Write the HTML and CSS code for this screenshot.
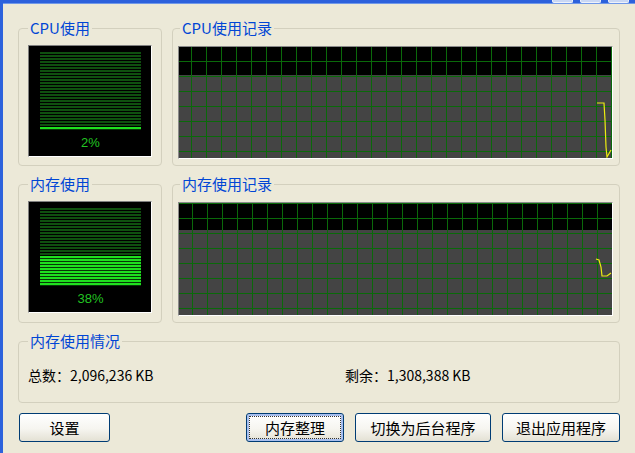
FILE: index.html
```html
<!DOCTYPE html>
<html lang="zh-CN">
<head>
    <meta charset="UTF-8">
    <title>内存整理</title>
    <link rel="stylesheet" href="styles.css">
</head>
<body>
    <div class="window">
        <div class="titlebar">
            <span class="tb-btn"></span>
            <span class="tb-btn"></span>
            <span class="tb-btn"></span>
        </div>

        <div class="content">
            <fieldset class="group group-meter">
                <legend>CPU使用</legend>
                <div class="meter">
                    <div class="bars"><div class="bars-fill" style="height: 3px"></div></div>
                    <div class="percent">2%</div>
                </div>
            </fieldset>

            <fieldset class="group group-graph">
                <legend>CPU使用记录</legend>
                <div class="graph graph-cpu">
                    <svg class="trace"><polyline points="418,56 425,56 426,73 427,100 428,110 432,103"/></svg>
                </div>
            </fieldset>

            <fieldset class="group group-meter">
                <legend>内存使用</legend>
                <div class="meter">
                    <div class="bars"><div class="bars-fill" style="height: 30px"></div></div>
                    <div class="percent">38%</div>
                </div>
            </fieldset>

            <fieldset class="group group-graph">
                <legend>内存使用记录</legend>
                <div class="graph graph-mem">
                    <svg class="trace"><polyline points="417,56 420,57 422,64 423,73 428,73 432,70"/></svg>
                </div>
            </fieldset>

            <fieldset class="group group-info">
                <legend>内存使用情况</legend>
                <div class="info">
                    <span>总数：2,096,236 KB</span>
                    <span>剩余：1,308,388 KB</span>
                </div>
            </fieldset>

            <div class="buttons">
                <button class="btn btn-settings">设置</button>
                <button class="btn btn-default">内存整理</button>
                <button class="btn btn-bg">切换为后台程序</button>
                <button class="btn btn-exit">退出应用程序</button>
            </div>
        </div>
    </div>
</body>
</html>
```

FILE: styles.css
```css
* {
    box-sizing: border-box;
}
html, body {
    margin: 0;
}
body {
    background-color: #ece9d8;
    font-family: "Noto Sans CJK SC", "Noto Sans", sans-serif;
    color: #000;
}

/* window frame */
.window {
    width: 635px;
    height: 453px;
    border-left: 3px solid #2d62dc;
}
.titlebar {
    height: 4px;
    background-color: #2c61dc;
    border-bottom: 1px solid #7098e8;
    display: flex;
    justify-content: flex-end;
    gap: 7px;
    padding-right: 6px;
}
.tb-btn {
    width: 21px;
    height: 3px;
    background-color: #c9d7f4;
    border: 1px solid #eef2fb;
    border-top: none;
    border-radius: 0 0 2px 2px;
}

.content {
    display: grid;
    grid-template-columns: 144px 448px;
    grid-template-rows: 146px 147px 70px 29px;
    gap: 10px;
    padding: 16px 15px 0;
}

/* group boxes */
.group {
    margin: 0;
    min-width: 0;
    border: 1px solid #d3d0be;
    border-radius: 4px;
    display: flex;
    flex-direction: column;
}
.group legend {
    font-size: 15px;
    line-height: 16px;
    color: #0046d5;
    padding: 0 2px;
}
.group-meter {
    padding: 0 9px 8px;
}
.group-graph {
    padding: 0 6px 6px 5px;
}
.group-graph legend {
    margin-left: 2px;
}
.group-info {
    grid-column: 1 / 3;
    padding: 0 9px;
}

/* bar meters */
.meter {
    margin-top: 9px;
    height: 112px;
    background-color: #000;
    border: 1px solid;
    border-color: #7f7f7f #fff #fff #7f7f7f;
    padding: 6px 10px 0 11px;
}
.bars {
    height: 78px;
    display: flex;
    flex-direction: column;
    justify-content: flex-end;
    background: repeating-linear-gradient(to bottom, #0f500f 0 2px, #000 2px 3px);
}
.bars-fill {
    background: repeating-linear-gradient(to bottom, #1fe01f 0 2px, #063806 2px 3px);
}
.percent {
    margin-top: 5px;
    text-align: center;
    font: 13px/16px "Liberation Sans", sans-serif;
    color: #22c422;
}

/* history graphs */
.graph {
    position: relative;
    flex: 1;
    margin-top: 10px;
    border: 1px solid;
    border-color: #8a8a8a #fff #fff #8a8a8a;
    background:
        linear-gradient(to right, #0a690a 1px, transparent 1px) var(--vx) 0 / 15px 100%,
        linear-gradient(to bottom, #0a690a 1px, transparent 1px) 0 var(--hy) / 100% 15px,
        linear-gradient(to bottom, #000 var(--top), #444 var(--top));
}
.graph-cpu {
    --vx: 12px;
    --hy: 14px;
    --top: 28px;
}
.graph-mem {
    --vx: 13px;
    --hy: 0px;
    --top: 27px;
}
.trace {
    position: absolute;
    left: 0;
    top: 0;
    width: 100%;
    height: 100%;
}
.trace polyline {
    fill: none;
    stroke: #ecec10;
    stroke-width: 1.2;
}

/* totals */
.info {
    margin-top: 17px;
    display: grid;
    grid-template-columns: 317px auto;
    font-size: 14px;
    line-height: 18px;
}

/* buttons */
.buttons {
    grid-column: 1 / 3;
    display: flex;
    gap: 11px;
    padding-left: 1px;
}
.btn {
    height: 29px;
    padding: 0;
    font: 15px/1 "Noto Sans CJK SC", sans-serif;
    color: #000;
    border: 1px solid #003c74;
    border-radius: 3px;
    background: linear-gradient(#fff, #f6f5f0 55%, #e4e1d4);
}
.btn-settings {
    width: 91px;
    margin-right: auto;
}
.btn-default {
    width: 98px;
    box-shadow: inset 0 0 0 2px #a8bfee;
    outline: 1px dotted #333;
    outline-offset: -4px;
}
.btn-bg {
    width: 136px;
}
.btn-exit {
    width: 118px;
}
```
